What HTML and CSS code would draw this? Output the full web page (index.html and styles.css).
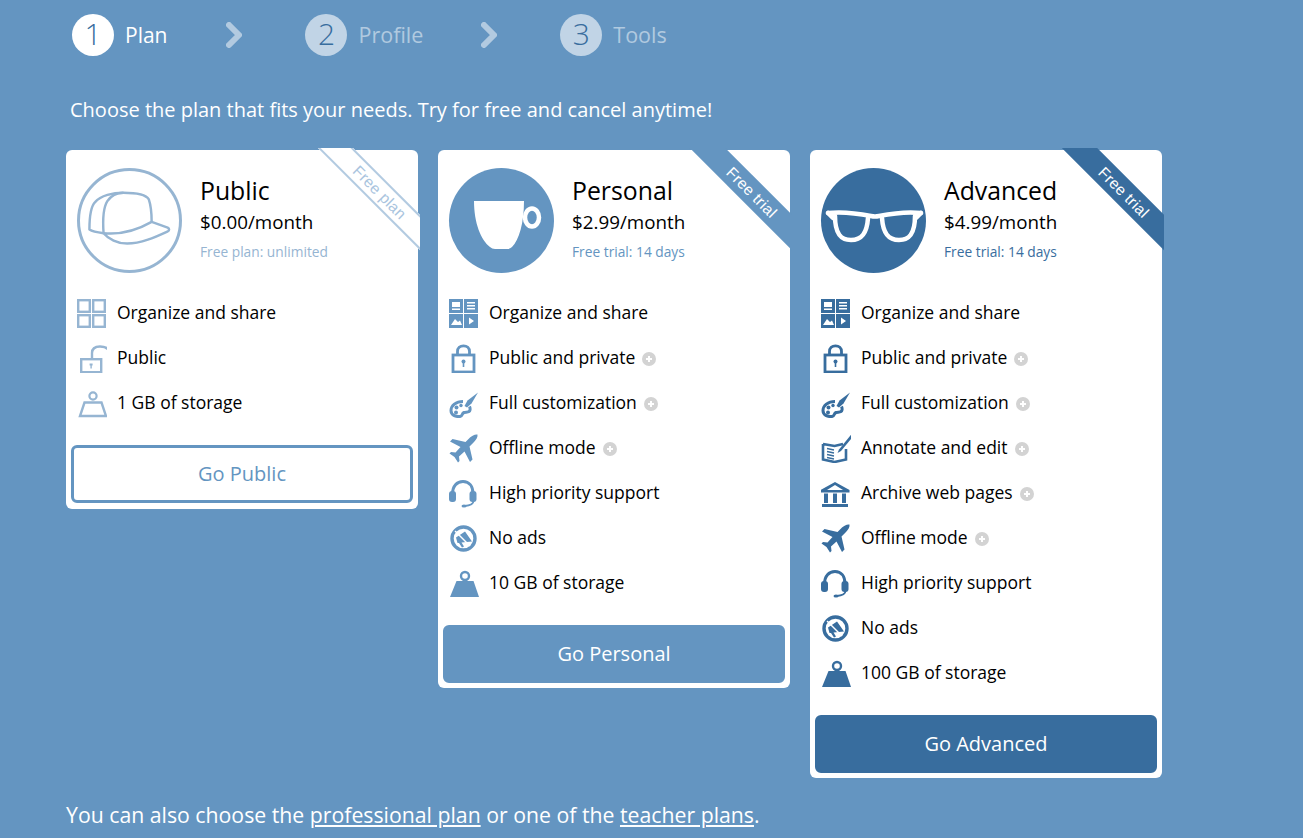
FILE: index.html
```html
<!DOCTYPE html>
<html lang="en">
<head>
  <meta charset="UTF-8" />
  <title>Choose a plan</title>
  <link rel="stylesheet" href="styles.css">
</head>
<body>
  <svg class="defs" xmlns="http://www.w3.org/2000/svg">
    <symbol id="i-grid" viewBox="0 0 30 30">
      <g fill="none" stroke="currentColor" stroke-width="2.4">
        <rect x="1.2" y="2.2" width="11.6" height="11.6"/><rect x="16.2" y="2.2" width="11.6" height="11.6"/>
        <rect x="1.2" y="17.2" width="11.6" height="11.6"/><rect x="16.2" y="17.2" width="11.6" height="11.6"/>
      </g>
    </symbol>
    <symbol id="i-board" viewBox="0 0 30 30">
      <path fill="currentColor" d="M0 1h14v14H0zM15 1h14v14H15zM0 16h14v14H0zM15 16h14v14H15z"/>
      <path fill="#fff" d="M3 4h8v5H3zM3 10.500h8V12H3zM18 4h8v1.500h-8zM18 7h8v1.500h-8zM18 10h8v1.500h-8zM2 27l4-6 3 3 2-1.500 2 4.500zM20 19.500l5 3.500-5 3.500z"/>
    </symbol>
    <symbol id="i-lock-open" viewBox="0 0 30 30">
      <rect x="4.200" y="16.200" width="20" height="13" fill="none" stroke="currentColor" stroke-width="2.400"/>
      <path d="M15 15V10C15 6 18 3.500 23 3.500C28 3.500 32 6 33 10" fill="none" stroke="currentColor" stroke-width="2.400"/>
      <path d="M12.600 20.500h3v2h-.8v3h-1.400v-3h-.8z" fill="currentColor"/>
    </symbol>
    <symbol id="i-lock" viewBox="0 0 30 30">
      <rect x="4" y="12" width="21" height="17" fill="none" stroke="currentColor" stroke-width="2.800"/>
      <path d="M8.500 12V8.500C8.500 5 11 2.800 14.500 2.800C18 2.800 20.500 5 20.500 8.500V12" fill="none" stroke="currentColor" stroke-width="2.800"/>
      <circle cx="14.500" cy="18.500" r="2" fill="currentColor"/><rect x="13.700" y="19" width="1.600" height="5" fill="currentColor"/>
    </symbol>
    <symbol id="i-palette" viewBox="0 0 30 30">
      <path d="M14 13.500C7 13.500 2 17.500 2 22.500C2 27 6.500 29 11 28.500C14 28 12.500 25.500 15 24.500C17 23.700 20.500 25 21 22C21.300 20.500 21 19.500 20.500 18.500" fill="none" stroke="currentColor" stroke-width="3"/>
      <path d="M29 4.500L18.500 12.500L15.500 18L18 19.500L22.500 15.500z" fill="currentColor"/>
      <circle cx="7.500" cy="19.500" r="2" fill="currentColor"/><circle cx="12" cy="17.500" r="1.700" fill="currentColor"/><circle cx="7" cy="24.500" r="2" fill="currentColor"/>
    </symbol>
    <symbol id="i-plane" viewBox="0 0 30 30">
      <path fill="currentColor" d="M28.500 1.500C26 1 23 2.500 21 4.500L16.500 9L3.500 6L1 8.500L11.500 14L6.500 19.500L2 19L.5 20.500L5.500 24L9 29.500L10.500 28L10 23.500L15.500 18.500L21 29L23.500 26.500L20.500 13.500L25 9C27 7 29 4 28.500 1.500Z"/>
    </symbol>
    <symbol id="i-headset" viewBox="0 0 30 30">
      <path d="M3.500 16C3.500 8 8 3.500 14 3.500C20 3.500 24 8 24 16" fill="none" stroke="currentColor" stroke-width="3"/>
      <rect x="0" y="13" width="7" height="11" rx="3" fill="currentColor"/><rect x="20.500" y="13" width="7" height="11" rx="3" fill="currentColor"/>
      <path d="M24.500 23C24.500 26.500 21 27.500 15.500 28" fill="none" stroke="currentColor" stroke-width="1.800"/>
      <ellipse cx="15" cy="28" rx="2.500" ry="1.500" fill="currentColor"/>
    </symbol>
    <symbol id="i-noads" viewBox="0 0 30 30">
      <circle cx="14.500" cy="15.500" r="11.500" fill="none" stroke="currentColor" stroke-width="3.400"/>
      <path fill="currentColor" d="M7 14.500L16 8.500L23 18.500L12.500 19.500L15 23.500L13 24.500L10 20L8.500 20Z"/>
      <path d="M6 8L21 23" stroke="#fff" stroke-width="1.400"/>
    </symbol>
    <symbol id="i-weight" viewBox="0 0 30 30">
      <circle cx="16" cy="8" r="4" fill="none" stroke="currentColor" stroke-width="2.400"/>
      <path fill="currentColor" d="M7.500 13H24.500L30 29H1Z"/>
    </symbol>
    <symbol id="i-weight-line" viewBox="0 0 30 30">
      <circle cx="16" cy="8" r="3.600" fill="none" stroke="currentColor" stroke-width="2.200"/>
      <path fill="none" stroke="currentColor" stroke-width="2.400" d="M7.500 14.500H24.500L29 28H3Z"/>
    </symbol>
    <symbol id="i-note" viewBox="0 0 30 30">
      <path fill="none" stroke="currentColor" stroke-width="2.600" d="M2 11L13.500 13L22 11M2 11V26.500L13.500 29L25 26.500V16"/>
      <path stroke="currentColor" stroke-width="1.400" d="M6 15.500L13 17M6 18.500L13 20M6 21.500L13 23M6 24.500L13 26"/>
      <path fill="currentColor" d="M31 .5L33 2.500L20 18L16.500 20L18 16.500Z"/>
    </symbol>
    <symbol id="i-bank" viewBox="0 0 30 30">
      <path fill="currentColor" d="M14 4L28.500 12V14.500H-.5V12ZM14 7L6 12H22Z"/>
      <path fill="currentColor" d="M3 15.500h4v9.500H3zM12 15.500h4v9.500h-4zM21 15.500h4v9.500h-4zM1 26h26v3H1z"/>
    </symbol>
    <symbol id="i-cap" viewBox="0 0 105 105">
      <g fill="none" stroke="currentColor" stroke-width="2.600" stroke-linejoin="round">
        <path d="M25 66C18 65 13 64 10 62C10 50 11 38 16 33C22 26 35 23 46 23C58 23 70 25 73 30C75 36 76 45 76 54"/>
        <path d="M25 66C24 52 24 40 29 32C33 26 40 23 46 23"/>
        <path d="M76 54L93 60C95 61 95 63 93 64C80 70 65 77 50 77C40 77 30 72 25 66C45 68 62 62 76 54"/>
      </g>
    </symbol>
    <symbol id="i-cup" viewBox="0 0 105 105">
      <path fill="#fff" d="M25 33H75C75 55 70 72 63 79Q61 81 58 81H46Q43 81 41 79C32 72 25 55 25 33Z"/>
      <ellipse cx="83" cy="49.500" rx="7" ry="9" fill="none" stroke="#fff" stroke-width="4.500"/>
    </symbol>
    <symbol id="i-glasses" viewBox="0 0 105 105">
      <g fill="none" stroke="#fff" stroke-width="4.500" stroke-linejoin="round" stroke-linecap="round">
        <path d="M7 45C25 43 40 46 50 48Q54 49 58 48C68 46 83 43 100 45"/>
        <path d="M7 45L12 50M100 45L95 50"/>
        <path d="M14 48C14 66 20 72 30 72C41 72 46 65 47 50"/>
        <path d="M61 50C62 65 67 72 78 72C88 72 94 66 94 48"/>
      </g>
    </symbol>
  </svg>

  <div class="page">
    <nav class="steps">
      <div class="step step-on"><span class="num">1</span><span class="step-name">Plan</span></div>
      <svg class="chev" width="20" height="28" viewBox="0 0 20 28"><path d="M5 4L15 14L5 24" fill="none" stroke="#fff" stroke-width="6" stroke-linecap="round" stroke-linejoin="round"/></svg>
      <div class="step"><span class="num">2</span><span class="step-name">Profile</span></div>
      <svg class="chev chev-2" width="20" height="28" viewBox="0 0 20 28"><path d="M5 4L15 14L5 24" fill="none" stroke="#fff" stroke-width="6" stroke-linecap="round" stroke-linejoin="round"/></svg>
      <div class="step"><span class="num">3</span><span class="step-name">Tools</span></div>
    </nav>

    <p class="intro">Choose the plan that fits your needs. Try for free and cancel anytime!</p>

    <div class="plans">
      <section class="card card-public">
        <div class="ribbon"><span>Free plan</span></div>
        <div class="head">
          <svg class="badge"><use href="#i-cap"/></svg>
          <div class="info">
            <h2>Public</h2>
            <div class="price">$0.00/month</div>
            <div class="note">Free plan: unlimited</div>
          </div>
        </div>
        <ul class="feats">
          <li><svg class="ico"><use href="#i-grid"/></svg>Organize and share</li>
          <li><svg class="ico"><use href="#i-lock-open"/></svg>Public</li>
          <li><svg class="ico"><use href="#i-weight-line"/></svg>1 GB of storage</li>
        </ul>
        <button class="go">Go Public</button>
      </section>

      <section class="card card-personal">
        <div class="ribbon"><span>Free trial</span></div>
        <div class="head">
          <svg class="badge"><use href="#i-cup"/></svg>
          <div class="info">
            <h2>Personal</h2>
            <div class="price">$2.99/month</div>
            <div class="note">Free trial: 14 days</div>
          </div>
        </div>
        <ul class="feats">
          <li><svg class="ico"><use href="#i-board"/></svg>Organize and share</li>
          <li><svg class="ico"><use href="#i-lock"/></svg>Public and private<i class="more"></i></li>
          <li><svg class="ico"><use href="#i-palette"/></svg>Full customization<i class="more"></i></li>
          <li><svg class="ico"><use href="#i-plane"/></svg>Offline mode<i class="more"></i></li>
          <li><svg class="ico"><use href="#i-headset"/></svg>High priority support</li>
          <li><svg class="ico"><use href="#i-noads"/></svg>No ads</li>
          <li><svg class="ico"><use href="#i-weight"/></svg>10 GB of storage</li>
        </ul>
        <button class="go">Go Personal</button>
      </section>

      <section class="card card-advanced">
        <div class="ribbon"><span>Free trial</span></div>
        <div class="head">
          <svg class="badge"><use href="#i-glasses"/></svg>
          <div class="info">
            <h2>Advanced</h2>
            <div class="price">$4.99/month</div>
            <div class="note">Free trial: 14 days</div>
          </div>
        </div>
        <ul class="feats">
          <li><svg class="ico"><use href="#i-board"/></svg>Organize and share</li>
          <li><svg class="ico"><use href="#i-lock"/></svg>Public and private<i class="more"></i></li>
          <li><svg class="ico"><use href="#i-palette"/></svg>Full customization<i class="more"></i></li>
          <li><svg class="ico"><use href="#i-note"/></svg>Annotate and edit<i class="more"></i></li>
          <li><svg class="ico"><use href="#i-bank"/></svg>Archive web pages<i class="more"></i></li>
          <li><svg class="ico"><use href="#i-plane"/></svg>Offline mode<i class="more"></i></li>
          <li><svg class="ico"><use href="#i-headset"/></svg>High priority support</li>
          <li><svg class="ico"><use href="#i-noads"/></svg>No ads</li>
          <li><svg class="ico"><use href="#i-weight"/></svg>100 GB of storage</li>
        </ul>
        <button class="go">Go Advanced</button>
      </section>
    </div>

    <p class="foot">You can also choose the <a href="#">professional plan</a> or one of the <a href="#">teacher plans</a>.</p>
  </div>
</body>
</html>
```

FILE: styles.css
```css
html, body {
  height: 100%;
}
body {
  margin: 0;
  background-color: #6495c1;
  color: #fff;
  font-family: "Open Sans", sans-serif;
  overflow: hidden;
}
.defs {
  display: none;
}
.page {
  padding: 14px 0 0 66px;
}
.steps {
  display: flex;
  align-items: center;
  padding-left: 6px;
  height: 42px;
}
.step {
  display: flex;
  align-items: center;
  gap: 11px;
  font-size: 21.5px;
  color: rgba(255,255,255,0.5);
}
.step-name {
  margin-top: -2px;
}
.step-on {
  color: #fff;
  font-size: 21px;
}
.step-on .step-name {
  margin-top: 0;
}
.num {
  width: 42px;
  height: 42px;
  border-radius: 50%;
  background: rgba(255,255,255,0.6);
  color: #386d9e;
  font-size: 30px;
  font-weight: 300;
  line-height: 40px;
  text-align: center;
}
.step-on .num {
  background: #fff;
}
.chev {
  margin: 0 61px 0 57px;
  opacity: 0.5;
}
.chev-2 {
  margin-left: 56px;
}
.intro {
  margin: 41px 0 0 4px;
  font-size: 20px;
  line-height: 26px;
}
.plans {
  display: flex;
  align-items: flex-start;
  gap: 20px;
  margin-top: 27px;
}
.card {
  position: relative;
  width: 352px;
  background: #fff;
  border-radius: 6px;
  color: #000;
  --c: #6495c1;
  --ico: #6495c1;
}
.card-public {
  --ico: #96b5d2;
}
.card-advanced {
  --c: #386d9e;
  --ico: #386d9e;
}
.ribbon {
  position: absolute;
  top: -2px;
  right: -2px;
  width: 103px;
  height: 103px;
  overflow: hidden;
}
.ribbon span {
  position: absolute;
  left: -19px;
  top: 30px;
  width: 160px;
  height: 25px;
  background: var(--c);
  color: #fff;
  font-family: "Liberation Sans", Arial, sans-serif;
  font-size: 15.5px;
  letter-spacing: 0.3px;
  line-height: 25px;
  text-align: center;
  text-indent: 5px;
  transform: rotate(45deg);
}
.card-public .ribbon span {
  box-sizing: border-box;
  background: #fff;
  border-top: 2px solid #b3cbe1;
  border-bottom: 2px solid #b3cbe1;
  color: #a9c4de;
  line-height: 21px;
}
.head {
  display: flex;
  gap: 18px;
  height: 122px;
  padding: 18px 0 0 11px;
}
.badge {
  width: 105px;
  height: 105px;
  flex: none;
  border-radius: 50%;
  background: var(--c);
}
.card-public .badge {
  box-sizing: border-box;
  background: #fff;
  border: 3px solid #96b5d2;
  color: #96b5d2;
}
.info {
  padding-top: 6px;
}
h2 {
  margin: 0 0 1px;
  font-size: 24.8px;
  font-weight: 400;
  line-height: 32px;
}
.price {
  font-size: 18.8px;
  line-height: 30px;
}
.note {
  font-size: 13.75px;
  line-height: 30px;
  color: var(--c);
}
.card-public .note {
  color: #96b5d2;
}
.feats {
  list-style: none;
  margin: 0;
  padding: 0 0 0 11px;
}
.feats li {
  display: flex;
  align-items: center;
  box-sizing: border-box;
  height: 45px;
  padding-bottom: 2px;
  font-size: 17.5px;
}
.ico {
  width: 30px;
  height: 30px;
  flex: none;
  margin: 2px 10px 0 0;
  color: var(--ico);
  overflow: visible;
}
.more {
  position: relative;
  width: 14px;
  height: 14px;
  margin: 5px 0 0 7px;
  border-radius: 50%;
  background: #d3d3d3;
}
.more::before,
.more::after {
  content: "";
  position: absolute;
  background: #fff;
}
.more::before {
  left: 4px;
  top: 6px;
  width: 6px;
  height: 2px;
}
.more::after {
  left: 6px;
  top: 4px;
  width: 2px;
  height: 6px;
}
.go {
  display: block;
  box-sizing: border-box;
  width: 342px;
  height: 58px;
  margin: 20px 5px 0;
  padding-bottom: 2px;
  border: 3px solid var(--c);
  border-radius: 6px;
  background: var(--c);
  color: #fff;
  font-family: inherit;
  font-size: 20px;
  cursor: pointer;
}
.card-public .go {
  background: #fff;
  color: var(--c);
}
.card::after {
  content: "";
  display: block;
  height: 5px;
}
.card-public::after {
  height: 6px;
}
.foot {
  margin: 23px 0 0;
  font-size: 21.25px;
  line-height: 28px;
}
.foot a {
  color: #fff;
}
```
